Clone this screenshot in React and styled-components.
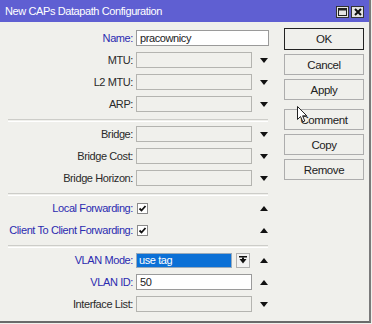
import React from 'react';
import styled, { createGlobalStyle } from 'styled-components';

const GlobalStyle = createGlobalStyle`
  html, body {
    margin: 0;
    padding: 0;
    background: #f0f0ec;
  }
  body {
    font-family: "Liberation Sans", Arial, sans-serif;
    font-size: 11px;
    letter-spacing: -0.4px;
    color: #2a2a2a;
  }
`;

const Window = styled.div`
  position: relative;
  width: 369px;
  height: 321px;
  background: #f0f0ec;
  border-right: 2px solid #7a7a7a;
  border-bottom: 2px solid #6a6a6a;
  display: flex;
  flex-direction: column;
  overflow: hidden;
`;

const TitleBar = styled.div`
  height: 22px;
  flex: 0 0 22px;
  background: #5f5fd2;
  display: flex;
  align-items: center;
  justify-content: space-between;
  padding: 0 5px 0 5px;
  color: #fff;
  font-size: 11px;
  box-sizing: border-box;
`;

const TitleButtons = styled.div`
  display: flex;
  gap: 2px;
  margin-top: 2px;
`;

const TitleButton = styled.div`
  width: 13px;
  height: 12px;
  background: #e4e4e4;
  border: 1px solid #333;
  box-sizing: border-box;
  display: flex;
  align-items: center;
  justify-content: center;
`;

const Body = styled.div`
  flex: 1;
  display: flex;
  padding-top: 5px;
`;

const Form = styled.div`
  width: 270px;
  display: flex;
  flex-direction: column;
`;

const Row = styled.div`
  height: 22px;
  display: grid;
  grid-template-columns: 133px 118px 15px;
  align-items: center;
  column-gap: 3px;
`;

const Label = styled.div`
  text-align: right;
  white-space: nowrap;
  color: ${p => (p.$blue ? '#2b2bb0' : '#2a2a2a')};
`;

const Input = styled.div`
  height: 16px;
  box-sizing: border-box;
  border: 1px solid ${p => (p.$white ? '#9a9a9a' : '#b4b4b0')};
  background: ${p => (p.$white ? '#fff' : '#f0f0ec')};
  padding: 0 3px;
  line-height: 14px;
  color: #222;
  width: ${p => p.$width || '116px'};
  white-space: nowrap;
`;

const SelectGroup = styled.div`
  display: flex;
  align-items: center;
  gap: 4px;
`;

const Highlight = styled.div`
  width: 96px;
  height: 15px;
  box-sizing: border-box;
  background: #0b70d6;
  border: 1px solid #9ab;
  color: #fff;
  padding: 0 2px;
  line-height: 13px;
`;

const SmallButton = styled.div`
  width: 14px;
  height: 15px;
  box-sizing: border-box;
  border: 1px solid #b0b0b0;
  background: #f2f2f2;
  display: flex;
  align-items: center;
  justify-content: center;
`;

const Check = styled.div`
  width: 11px;
  height: 11px;
  box-sizing: border-box;
  border: 1px solid #8a8a8a;
  background: #fff;
  margin-left: 1px;
  display: flex;
  align-items: center;
  justify-content: center;
`;

const Separator = styled.div`
  height: 8px;
  display: flex;
  align-items: flex-start;
  padding: 4px 2px 0 8px;
  box-sizing: border-box;
  &::after {
    content: '';
    flex: 1;
    height: 1px;
    border-top: 1px solid #cdcdc9;
    border-bottom: 1px solid #fff;
  }
`;

const Arrow = styled.div`
  width: 0;
  height: 0;
  margin-left: 3px;
  border-left: 4.5px solid transparent;
  border-right: 4.5px solid transparent;
  ${p => (p.$up
    ? 'border-bottom: 5px solid #111;'
    : 'border-top: 5px solid #111;')}
`;

const Buttons = styled.div`
  margin-left: 14px;
  margin-top: 1px;
  display: flex;
  flex-direction: column;
  gap: 4px;
`;

const Button = styled.div`
  width: 80px;
  height: ${p => (p.$default ? '22px' : '21px')};
  box-sizing: border-box;
  border: 1px solid ${p => (p.$default ? '#222' : '#adadad')};
  background: #f0f0ec;
  display: flex;
  align-items: center;
  justify-content: center;
  color: #222;
  font-size: 11.5px;
  margin-top: ${p => (p.$gap ? '5px' : '0')};
`;

const Cursor = styled.svg`
  position: absolute;
  left: 297px;
  top: 106px;
`;

const CheckMark = () => (
  <svg width="9" height="9" viewBox="0 0 9 9">
    <path d="M1.5 4.5 L3.5 6.5 L7.5 2" stroke="#111" strokeWidth="1.8" fill="none" />
  </svg>
);

const Field = ({ label, blue, value, white, arrow }) => (
  <Row>
    <Label $blue={blue}>{label}:</Label>
    <Input $white={white}>{value}</Input>
    {arrow && <Arrow $up={arrow === 'up'} />}
  </Row>
);

const CheckField = ({ label }) => (
  <Row>
    <Label $blue>{label}:</Label>
    <Check><CheckMark /></Check>
    <Arrow $up />
  </Row>
);

export default function App() {
  return (
    <>
      <GlobalStyle />
      <Window>
        <TitleBar>
          <span>New CAPs Datapath Configuration</span>
          <TitleButtons>
            <TitleButton>
              <svg width="9" height="8"><rect x="0.5" y="0.5" width="8" height="7" fill="none" stroke="#222" /><rect x="0.5" y="0.5" width="8" height="2" fill="#222" /></svg>
            </TitleButton>
            <TitleButton>
              <svg width="8" height="8"><path d="M1 1 L7 7 M7 1 L1 7" stroke="#111" strokeWidth="2" /></svg>
            </TitleButton>
          </TitleButtons>
        </TitleBar>
        <Body>
          <Form>
            <Row>
              <Label $blue>Name:</Label>
              <Input $white $width="133px">pracownicy</Input>
            </Row>
            <Field label="MTU" arrow="down" />
            <Field label="L2 MTU" arrow="down" />
            <Field label="ARP" arrow="down" />
            <Separator />
            <Field label="Bridge" arrow="down" />
            <Field label="Bridge Cost" arrow="down" />
            <Field label="Bridge Horizon" arrow="down" />
            <Separator />
            <CheckField label="Local Forwarding" />
            <CheckField label="Client To Client Forwarding" />
            <Separator />
            <Row>
              <Label $blue>VLAN Mode:</Label>
              <SelectGroup>
                <Highlight>use tag</Highlight>
                <SmallButton>
                  <svg width="8" height="8"><rect x="0" y="0" width="8" height="1.5" fill="#111" /><path d="M0.5 3 L7.5 3 L4 7.5 Z" fill="#111" /><rect x="3" y="1.5" width="2" height="2" fill="#111" /></svg>
                </SmallButton>
              </SelectGroup>
              <Arrow $up />
            </Row>
            <Field label="VLAN ID" blue white value="50" arrow="up" />
            <Field label="Interface List" arrow="down" />
          </Form>
          <Buttons>
            <Button $default>OK</Button>
            <Button>Cancel</Button>
            <Button>Apply</Button>
            <Button $gap>Comment</Button>
            <Button>Copy</Button>
            <Button>Remove</Button>
          </Buttons>
        </Body>
        <Cursor width="12" height="18" viewBox="0 0 12 18">
          <path d="M0.5 0.5 L0.5 13.5 L3.5 10.5 L5.8 15.8 L7.8 15 L5.6 9.8 L9.8 9.8 Z" fill="#fff" stroke="#222" strokeWidth="1" />
        </Cursor>
      </Window>
    </>
  );
}
